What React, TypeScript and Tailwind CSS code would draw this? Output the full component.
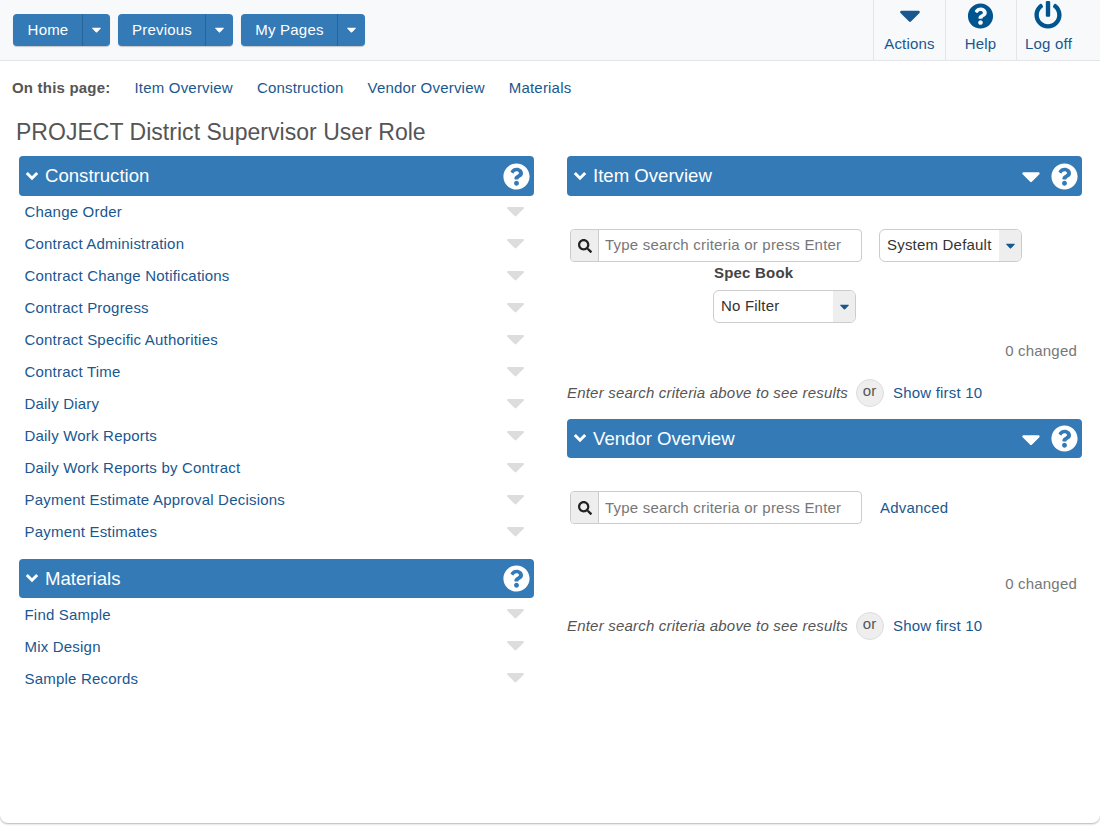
import React from "react";
import { FaCaretDown, FaPowerOff, FaQuestionCircle, FaSearch } from "react-icons/fa";

const constructionLinks = [
  "Change Order",
  "Contract Administration",
  "Contract Change Notifications",
  "Contract Progress",
  "Contract Specific Authorities",
  "Contract Time",
  "Daily Diary",
  "Daily Work Reports",
  "Daily Work Reports by Contract",
  "Payment Estimate Approval Decisions",
  "Payment Estimates",
];

const materialLinks = ["Find Sample", "Mix Design", "Sample Records"];

const SplitButton: React.FC<{ label: string; labelWidth: string }> = ({ label, labelWidth }) => (
  <div className="flex h-8 rounded bg-[#337ab7] text-white shadow-[0_1px_1px_rgba(0,0,0,0.2)]">
    <span className={`flex items-center justify-center pl-[1px] ${labelWidth}`}>{label}</span>
    <span className="flex w-[28px] items-center justify-center border-l border-[#2a6496] pr-[1px]">
      <FaCaretDown className="-mt-[1px] text-[15px]" />
    </span>
  </div>
);

const PanelHeader: React.FC<{ title: string; caret?: boolean; height?: string }> = ({
  title,
  caret,
  height = "h-10",
}) => (
  <div className={`flex items-center rounded bg-[#337ab7] pl-[6px] pr-[4px] text-white ${height}`}>
    <svg viewBox="0 0 14 10" className="mr-[6px] h-[10px] w-[14px] -mt-[1px]" fill="none">
      <polyline points="1.8,2 7,7.2 12.2,2" stroke="currentColor" strokeWidth="3" />
    </svg>
    <span className="text-[18.6px] tracking-normal">{title}</span>
    {caret && <FaCaretDown className="ml-auto mr-[5px] text-[30px]" />}
    <FaQuestionCircle className={`${caret ? "" : "ml-auto"} text-[27px]`} />
  </div>
);

const LinkList: React.FC<{ links: string[]; textPad?: string }> = ({ links, textPad = "pt-[1px]" }) => (
  <ul>
    {links.map((link) => (
      <li key={link} className="flex h-8 items-center pl-[5.5px] pr-[4px] text-[#19578f]">
        <span className={textPad}>{link}</span>
        <FaCaretDown className="ml-auto -mt-[4px] text-[29px] text-[#dddddd]" />
      </li>
    ))}
  </ul>
);

const SearchBox: React.FC<{ textPad?: string }> = ({ textPad = "" }) => (
  <div className="flex h-[33px] w-[292px] rounded border border-[#cccccc]">
    <span className="flex w-[28px] items-center justify-center rounded-l border-r border-[#cccccc] bg-[#eeeeee] text-[#222222]">
      <FaSearch className="text-[14px]" />
    </span>
    <span className={`flex items-center pl-[6px] text-[#777777] ${textPad}`}>
      Type search criteria or press Enter
    </span>
  </div>
);

const SelectBox: React.FC<{ label: string; width: string }> = ({ label, width }) => (
  <div className={`flex h-[33px] rounded-md border border-[#cccccc] text-[#333333] ${width}`}>
    <span className="flex flex-1 items-center pl-[7px]">{label}</span>
    <span className="flex w-[22px] items-center justify-center rounded-r-md bg-[#eeeeee] text-[#19578f]">
      <FaCaretDown className="text-[15px]" />
    </span>
  </div>
);

const ResultsFooter: React.FC = () => (
  <div className="flex h-7 items-center">
    <em className="text-[#555555]">Enter search criteria above to see results</em>
    <span className="ml-[8px] flex h-7 w-7 items-center justify-center rounded-full border border-[#dddddd] bg-[#eeeeee] pb-[4px] pr-[1px] text-[#555555]">
      or
    </span>
    <span className="ml-[9px] text-[#19578f]">Show first 10</span>
  </div>
);

const App: React.FC = () => (
  <div className="h-[826px] overflow-hidden bg-white font-['Liberation_Sans',Arial,sans-serif] text-[15px] tracking-[0.2px]">
    <div className="h-[823px] rounded-b-lg bg-white shadow-[0_1px_2px_rgba(0,0,0,0.3)]">
      <header className="flex h-[61px] border-b border-[#e3e5e8] bg-[#f7f9fb] pl-[13px]">
        <div className="flex gap-2 pt-[14px]">
          <SplitButton label="Home" labelWidth="w-[69px]" />
          <SplitButton label="Previous" labelWidth="w-[87px]" />
          <SplitButton label="My Pages" labelWidth="w-[96px]" />
        </div>
        <nav className="ml-auto flex text-[#19578f]">
          <div className="flex w-[72px] flex-col items-center border-l border-[#e3e5e8]">
            <FaCaretDown className="mt-[-2px] h-[34px] text-[30px]" />
            <span className="mt-[1px]">Actions</span>
          </div>
          <div className="flex w-[71px] flex-col items-center border-l border-[#e3e5e8] pr-[1px]">
            <FaQuestionCircle className="mt-[3px] h-[26px] text-[27px] text-[#00558f]" />
            <span className="mt-[4px]">Help</span>
          </div>
          <div className="flex w-[84px] flex-col items-start border-l border-[#e3e5e8] pl-[8px]">
            <FaPowerOff className="ml-[9px] mt-[1px] h-[28px] text-[28px] text-[#00558f]" />
            <span className="mt-[4px]">Log off</span>
          </div>
        </nav>
      </header>

      <div className="flex h-[54px] items-center gap-[24px] pl-[12px] pt-[1px] text-[#19578f]">
        <strong className="text-[#555555]">On this page:</strong>
        <span>Item Overview</span>
        <span>Construction</span>
        <span>Vendor Overview</span>
        <span>Materials</span>
      </div>

      <h1 className="pl-[16px] text-[23px] leading-[34px] tracking-[0.03px] text-[#555555]">
        PROJECT District Supervisor User Role
      </h1>

      <main className="mt-[7px] flex gap-[33px] pl-[19px]">
        <section className="w-[515px]">
          <PanelHeader title="Construction" />
          <LinkList links={constructionLinks} />
          <div className="mt-[11px]">
            <PanelHeader title="Materials" height="h-[39px]" />
            <LinkList links={materialLinks} textPad="pt-[3px]" />
          </div>
        </section>

        <section className="w-[515px]">
          <PanelHeader title="Item Overview" caret />
          <div className="mt-[33px] flex pl-[3px]">
            <SearchBox />
            <SelectBox label="System Default" width="ml-[17px] w-[143px]" />
          </div>
          <div className="ml-[146px] flex w-[143px] flex-col items-start">
            <strong className="pl-[1px] leading-[21px] text-[#444444]">Spec Book</strong>
            <SelectBox label="No Filter" width="mt-[7px] w-[143px]" />
          </div>
          <div className="mt-[17px] pr-[5px] text-right leading-[22px] text-[#777777]">0 changed</div>
          <div className="mt-[17px]">
            <ResultsFooter />
          </div>
          <div className="mt-[12px]">
            <PanelHeader title="Vendor Overview" caret height="h-[39px]" />
          </div>
          <div className="mt-[33px] flex items-center pl-[3px]">
            <SearchBox textPad="pt-[2px]" />
            <span className="ml-[18px] pt-[2px] text-[#19578f]">Advanced</span>
          </div>
          <div className="mt-[49px] pr-[5px] text-right leading-[22px] text-[#777777]">0 changed</div>
          <div className="mt-[17px]">
            <ResultsFooter />
          </div>
        </section>
      </main>
    </div>
  </div>
);

export default App;
